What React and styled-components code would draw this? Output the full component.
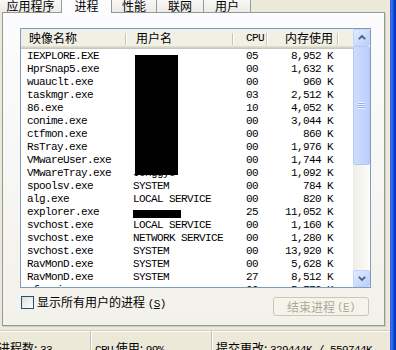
import React from "react";
import styled, { createGlobalStyle } from "styled-components";

const CJK = `"Noto Sans CJK SC", "Noto Sans", sans-serif`;
const MONO = `"Liberation Mono", "DejaVu Sans Mono", monospace`;

const GlobalStyle = createGlobalStyle`
  html, body {
    margin: 0;
    padding: 0;
    background: #ece9d8;
    overflow: hidden;
  }
  #root {
    width: 396px;
    height: 350px;
  }
`;

const Window = styled.div`
  display: flex;
  width: 396px;
  height: 350px;
  overflow: hidden;
  font-family: ${CJK};
  font-size: 12px;
  color: #000;
  background: #ece9d8;
`;
const Main = styled.div`
  flex: 1;
  min-width: 0;
  display: flex;
  flex-direction: column;
`;
const FrameEdge = styled.div`
  width: 6px;
  background: linear-gradient(to right, #2a5fe3 0, #3d70ea 2px, #0b3fd0 4px, #0834b8 6px);
`;

const TabStrip = styled.div`
  display: flex;
  align-items: flex-start;
  height: 20px;
  margin-top: -8px;
  flex-shrink: 0;
`;
const Tab = styled.div`
  position: relative;
  z-index: ${(p) => (p.$active ? 1 : 0)};
  width: ${(p) => p.$w}px;
  height: ${(p) => (p.$active ? 21 : 20)}px;
  box-sizing: border-box;
  border: 1px solid #919b9c;
  border-left: none;
  border-bottom: none;
  border-radius: 0 3px 0 0;
  background: ${(p) =>
    p.$active ? "#fcfcfe" : "linear-gradient(#ffffff, #ecebe6)"};
  padding-top: 7px;
  line-height: 12px;
  text-align: center;
`;

const Page = styled.div`
  margin: 0 5px 0 2px;
  border: 1px solid #919b9c;
  box-shadow: 1px 1px 0 #d0cdbf;
  background: linear-gradient(#fcfcfe, #f2f1ea);
  padding: 15px 13px 9px 17px;
  display: flex;
  flex-direction: column;
  flex-shrink: 0;
`;

const List = styled.div`
  width: 351px;
  height: 260px;
  box-sizing: border-box;
  border: 1px solid #7f9db9;
  background: #fff;
  display: flex;
  overflow: hidden;
`;
const Table = styled.div`
  width: 332px;
  display: flex;
  flex-direction: column;
  overflow: hidden;
`;
const COLS = "106px 107px 34px 71px 14px";
const Header = styled.div`
  display: grid;
  grid-template-columns: ${COLS};
  height: 20px;
  flex-shrink: 0;
  background: #f1f0e6;
  box-shadow: inset 0 -1px #cbc7b8, inset 0 -2px #d6d2c2, inset 0 -3px #e2decd;
`;
const HeaderCell = styled.div`
  display: flex;
  align-items: center;
  justify-content: ${(p) => (p.$right ? "flex-end" : "flex-start")};
  padding: 0 ${(p) => p.$pr || 0}px 2px ${(p) => p.$pl || 0}px;
  line-height: 12px;
  white-space: nowrap;
  background: ${(p) =>
    p.$sep
      ? "linear-gradient(#c7c5b2, #c7c5b2) no-repeat right 1px top 4px / 1px 12px, linear-gradient(#fff, #fff) no-repeat right 0 top 4px / 1px 12px"
      : "none"};
`;
const Mono = styled.span`
  font-family: ${MONO};
  font-size: 11px;
  letter-spacing: -0.6px;
`;
const Row = styled.div`
  display: grid;
  grid-template-columns: ${COLS};
  height: 13px;
  flex-shrink: 0;
  font-family: ${MONO};
  font-size: 11px;
  letter-spacing: -0.6px;
  line-height: 14px;
  white-space: nowrap;
`;
const Cell = styled.div`
  position: relative;
  overflow: hidden;
  padding-left: ${(p) => p.$pl || 0}px;
  padding-right: ${(p) => p.$pr || 0}px;
  text-align: ${(p) => (p.$right ? "right" : "left")};
`;
const Redact = styled.div`
  position: absolute;
  background: #000;
  top: ${(p) => p.$top}px;
  height: ${(p) => p.$h}px;
  left: ${(p) => p.$left}px;
  width: ${(p) => p.$w}px;
`;

const Scrollbar = styled.div`
  width: 17px;
  display: flex;
  flex-direction: column;
  background: linear-gradient(to right, #eeede5, #fdfdfa);
`;
const ScrollBtn = styled.div`
  height: 17px;
  box-sizing: border-box;
  border: 1px solid #c3d3fd;
  border-radius: 2px;
  background: linear-gradient(135deg, #e3ecfe, #b8cefb);
  display: flex;
  align-items: center;
  justify-content: center;
  flex-shrink: 0;
`;
const Thumb = styled.div`
  height: 119px;
  box-sizing: border-box;
  border: 1px solid #b4c8f6;
  border-radius: 2px;
  background: linear-gradient(to right, #cedcfd, #bccffb);
  display: flex;
  align-items: center;
  justify-content: center;
  flex-shrink: 0;
`;
const Grip = styled.div`
  width: 7px;
  height: 7px;
  background: repeating-linear-gradient(#eef3fe 0 1px, #8faff5 1px 2px);
`;
const Track = styled.div`
  flex: 1;
`;

const BottomRow = styled.div`
  display: flex;
  justify-content: space-between;
  align-items: flex-start;
  margin-top: 8px;
  padding: 0 2px 0 1px;
`;
const CheckLabel = styled.label`
  display: flex;
  align-items: center;
  gap: 3px;
  height: 13px;
  line-height: 13px;
`;
const CheckBox = styled.span`
  width: 13px;
  height: 13px;
  box-sizing: border-box;
  border: 1px solid #1c5180;
  background: linear-gradient(135deg, #dcdcd7, #ffffff);
`;
const Key = styled.span`
  text-decoration: underline;
`;
const EndButton = styled.button`
  width: 96px;
  height: 19px;
  margin-top: 1px;
  box-sizing: border-box;
  border: 1px solid #c9c7ba;
  border-radius: 3px;
  background: #f5f4ea;
  color: #aca899;
  font-family: ${CJK};
  font-size: 12px;
  line-height: 12px;
  padding: 0;
  display: flex;
  align-items: center;
  justify-content: center;
  gap: 2px;
`;

const StatusBar = styled.div`
  flex: 1;
  display: flex;
  margin: 4px 0 0 -5px;
  border-top: 1px solid #d0cdbf;
  box-shadow: inset 0 1px #fff;
`;
const Pane = styled.div`
  width: ${(p) => (p.$w ? `${p.$w}px` : "auto")};
  flex: ${(p) => (p.$w ? "none" : 1)};
  padding: 10px 0 0 ${(p) => p.$pl}px;
  line-height: 14px;
  white-space: nowrap;
  box-sizing: border-box;
  border-left: ${(p) => (p.$first ? "none" : "1px solid #c5c2b2")};
  box-shadow: ${(p) => (p.$first ? "none" : "inset 1px 0 #fff")};
`;

const Chevron = ({ up }) => (
  <svg width="8" height="5" viewBox="0 0 8 5">
    <polyline
      points={up ? "0.8,4.2 4,1 7.2,4.2" : "0.8,0.8 4,4 7.2,0.8"}
      fill="none"
      stroke="#4d6185"
      strokeWidth="1.8"
    />
  </svg>
);

const tabs = [
  { label: "应用程序", w: 62 },
  { label: "进程", w: 50, active: true },
  { label: "性能", w: 45 },
  { label: "联网", w: 47 },
  { label: "用户", w: 47 },
];

const full = [0, 13, 8, 43];
const rows = [
  ["IEXPLORE.EXE", "", "05", "8,952 K", [6, 7, 8, 43]],
  ["HprSnap5.exe", "", "00", "1,632 K", full],
  ["wuauclt.exe", "", "00", "960 K", full],
  ["taskmgr.exe", "", "03", "2,512 K", full],
  ["86.exe", "", "10", "4,052 K", full],
  ["conime.exe", "", "00", "3,044 K", full],
  ["ctfmon.exe", "", "00", "860 K", full],
  ["RsTray.exe", "", "00", "1,976 K", full],
  ["VMwareUser.exe", "", "00", "1,744 K", full],
  ["VMwareTray.exe", "Jonggyo", "00", "1,092 K", [0, 9, 8, 43]],
  ["spoolsv.exe", "SYSTEM", "00", "784 K"],
  ["alg.exe", "LOCAL SERVICE", "00", "820 K"],
  ["explorer.exe", "", "25", "11,052 K", [5, 8, 6, 48]],
  ["svchost.exe", "LOCAL SERVICE", "00", "1,160 K"],
  ["svchost.exe", "NETWORK SERVICE", "00", "1,280 K"],
  ["svchost.exe", "SYSTEM", "00", "13,920 K"],
  ["RavMonD.exe", "SYSTEM", "00", "5,628 K"],
  ["RavMonD.exe", "SYSTEM", "27", "8,512 K"],
  ["rfwmain.exe", "", "00", "5,772 K"],
];

const App = () => (
  <Window>
    <GlobalStyle />
    <Main>
      <TabStrip>
        {tabs.map((t) => (
          <Tab key={t.label} $w={t.w} $active={t.active}>
            {t.label}
          </Tab>
        ))}
      </TabStrip>
      <Page>
        <List>
          <Table>
            <Header>
              <HeaderCell $pl={8} $sep>映像名称</HeaderCell>
              <HeaderCell $pl={9} $sep>用户名</HeaderCell>
              <HeaderCell $pl={12} $sep>
                <Mono>CPU</Mono>
              </HeaderCell>
              <HeaderCell $right $pr={6} $sep>内存使用</HeaderCell>
              <HeaderCell />
            </Header>
            {rows.map(([name, user, cpu, mem, redact], i) => (
              <Row key={i}>
                <Cell $pl={6}>{name}</Cell>
                <Cell $pl={6}>
                  {user}
                  {redact && (
                    <Redact
                      $top={redact[0]}
                      $h={redact[1]}
                      $left={redact[2]}
                      $w={redact[3]}
                    />
                  )}
                </Cell>
                <Cell $pl={12}>{cpu}</Cell>
                <Cell $right $pr={6}>{mem}</Cell>
                <Cell />
              </Row>
            ))}
          </Table>
          <Scrollbar>
            <ScrollBtn>
              <Chevron up />
            </ScrollBtn>
            <Thumb>
              <Grip />
            </Thumb>
            <Track />
            <ScrollBtn>
              <Chevron />
            </ScrollBtn>
          </Scrollbar>
        </List>
        <BottomRow>
          <CheckLabel>
            <CheckBox />
            <span>
              显示所有用户的进程 <Mono>(<Key>S</Key>)</Mono>
            </span>
          </CheckLabel>
          <EndButton disabled>
            结束进程 <Mono>(<Key>E</Key>)</Mono>
          </EndButton>
        </BottomRow>
      </Page>
      <StatusBar>
        <Pane $first $w={95} $pl={3}>
          进程数: <Mono>33</Mono>
        </Pane>
        <Pane $w={121} $pl={4}>
          <Mono>CPU</Mono> 使用: <Mono>99%</Mono>
        </Pane>
        <Pane $pl={4}>
          提交更改: <Mono>329444K / 559744K</Mono>
        </Pane>
      </StatusBar>
    </Main>
    <FrameEdge />
  </Window>
);

export default App;
